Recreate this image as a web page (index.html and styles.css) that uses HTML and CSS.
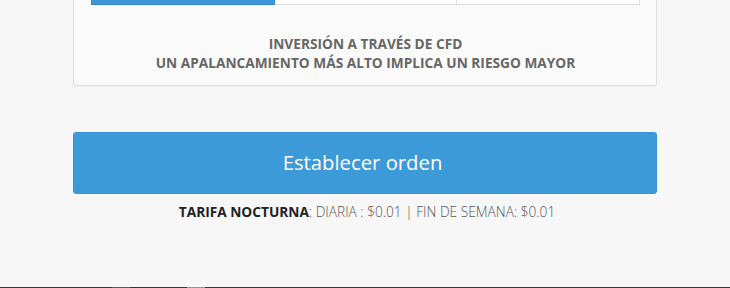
FILE: index.html
```html
<!DOCTYPE html>
<html lang="es">
<head>
<meta charset="utf-8">
<title>Establecer orden</title>
<link rel="stylesheet" href="styles.css">
</head>
<body>
<main class="page">
  <section class="card">
    <div class="tabs">
      <div class="tab tab-active"></div>
      <div class="tab"></div>
      <div class="tab"></div>
    </div>
    <p class="warning">INVERSIÓN A TRAVÉS DE CFD<br>UN APALANCAMIENTO MÁS ALTO IMPLICA UN RIESGO MAYOR</p>
  </section>
  <button class="order-btn" type="button">Establecer orden</button>
  <p class="fee"><strong>TARIFA NOCTURNA</strong>: DIARIA : $0.01 | FIN DE SEMANA: $0.01</p>
</main>
<div class="bottom-bar">
  <span class="seg seg-gray"></span>
  <span class="seg seg-orange"></span>
</div>
</body>
</html>
```
FILE: styles.css
```css
html, body {
  margin: 0;
  padding: 0;
  background: #f7f7f7;
  height: 100%;
  overflow: hidden;
}
body {
  font-family: "Open Sans", "Liberation Sans", sans-serif;
}
.page {
  padding: 0 73px;
}
.card {
  margin-top: -20px;
  background: #fafafa;
  border: 1px solid #dddddd;
  border-radius: 3px;
  box-shadow: 0 1px 1px rgba(0,0,0,0.04);
  padding: 0 16px 13px 17px;
}
.tabs {
  display: flex;
  height: 24px;
}
.tab {
  flex: 1;
  background: #ffffff;
  border: 1px solid #dddddd;
  border-top: none;
  border-left: none;
}
.tab:first-child {
  border-left: 1px solid #dddddd;
}
.tab-active {
  background: #3d95d9;
  border-color: #3589cb;
}
.tab-active:first-child {
  border-left-color: #3589cb;
}
.warning {
  margin: 29px 0 0;
  text-align: center;
  font-size: 13.7px;
  line-height: 19px;
  font-weight: 700;
  color: #666666;
}
.order-btn {
  display: block;
  width: 100%;
  margin-top: 46px;
  height: 62px;
  border: 1px solid #3a94d4;
  border-radius: 3px;
  background: #3d9ad9;
  color: #ffffff;
  font-family: "Open Sans", "Liberation Sans", sans-serif;
  font-size: 20.3px;
  font-weight: 400;
  padding: 0 5px 2px 0;
}
.fee {
  margin: 9px 0 0;
  padding-left: 4px;
  text-align: center;
  font-size: 13.7px;
  line-height: 18px;
  font-weight: 300;
  color: #555555;
}
.fee strong {
  font-weight: 700;
  color: #222222;
}
.bottom-bar {
  position: fixed;
  left: 0;
  right: 0;
  bottom: 0;
  height: 1px;
  background: #383838;
}
.seg {
  position: absolute;
  top: 0;
  height: 1px;
}
.seg-gray {
  left: 112px;
  width: 18px;
  background: #5c5c5c;
}
.seg-orange {
  left: 187px;
  width: 18px;
  background: #b98a5c;
}
```
